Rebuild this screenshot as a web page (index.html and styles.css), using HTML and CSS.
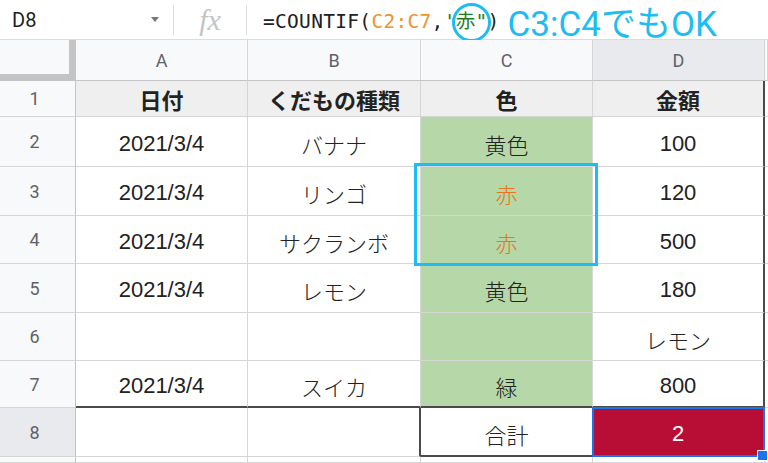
FILE: index.html
```html
<!DOCTYPE html>
<html lang="ja">
<head>
  <meta charset="UTF-8">
  <meta name="viewport" content="width=device-width, initial-scale=1.0">
  <title>COUNTIF</title>
  <link rel="stylesheet" href="styles.css">
</head>
<body>
  <div class="formula-bar">
    <div class="namebox">
      <span>D8</span>
      <span class="caret"></span>
    </div>
    <span class="sep"></span>
    <div class="fx">fx</div>
    <span class="sep"></span>
    <div class="formula">
      =COUNTIF(<span class="ref">C2:C7</span>,<span class="str">'赤"</span>)
    </div>
    <div class="note">C3:C4でもOK</div>
    <div class="circle"></div>
  </div>

  <div class="sheet">
    <!-- ヘッダー -->
    <div class="corner"></div>
    <div class="col-head">A</div>
    <div class="col-head">B</div>
    <div class="col-head">C</div>
    <div class="col-head active">D</div>
    <div class="col-head rest"></div>

    <div class="row-head">1</div>
    <div class="cell title">日付</div>
    <div class="cell title">くだもの種類</div>
    <div class="cell title">色</div>
    <div class="cell title edge">金額</div>
    <div class="cell rest"></div>

    <div class="row-head">2</div>
    <div class="cell">2021/3/4</div>
    <div class="cell">バナナ</div>
    <div class="cell green">黄色</div>
    <div class="cell edge">100</div>
    <div class="cell rest"></div>

    <div class="row-head">3</div>
    <div class="cell">2021/3/4</div>
    <div class="cell">リンゴ</div>
    <div class="cell green red">赤</div>
    <div class="cell edge">120</div>
    <div class="cell rest"></div>

    <div class="row-head">4</div>
    <div class="cell">2021/3/4</div>
    <div class="cell">サクランボ</div>
    <div class="cell green red">赤</div>
    <div class="cell edge">500</div>
    <div class="cell rest"></div>

    <div class="row-head">5</div>
    <div class="cell">2021/3/4</div>
    <div class="cell">レモン</div>
    <div class="cell green">黄色</div>
    <div class="cell edge">180</div>
    <div class="cell rest"></div>

    <div class="row-head">6</div>
    <div class="cell"></div>
    <div class="cell"></div>
    <div class="cell green"></div>
    <div class="cell edge">レモン</div>
    <div class="cell rest"></div>

    <div class="row-head">7</div>
    <div class="cell last">2021/3/4</div>
    <div class="cell last">スイカ</div>
    <div class="cell green last">緑</div>
    <div class="cell edge last">800</div>
    <div class="cell rest"></div>

    <div class="row-head active">8</div>
    <div class="cell"></div>
    <div class="cell boxed-left"></div>
    <div class="cell total">合計</div>
    <div class="cell edge result">2</div>
    <div class="cell rest"></div>

    <div class="row-head"></div>
    <div class="cell"></div>
    <div class="cell"></div>
    <div class="cell"></div>
    <div class="cell"></div>
    <div class="cell rest"></div>

    <div class="range-mark"></div>
  </div>
</body>
</html>
```

FILE: styles.css
```css
* {
  margin: 0;
  padding: 0;
  box-sizing: border-box;
}

body {
  width: 768px;
  height: 463px;
  overflow: hidden;
  background: #fff;
  font-family: "Liberation Sans", "Noto Sans CJK JP", sans-serif;
  color: #222;
}

/* 数式バー */
.formula-bar {
  position: relative;
  height: 40px;
  display: flex;
  align-items: center;
  border-bottom: 1px solid #dadce0;
}

.namebox {
  width: 173px;
  padding: 0 14px 0 12px;
  display: flex;
  align-items: center;
  justify-content: space-between;
  font-family: Roboto, sans-serif;
  font-size: 20px;
  color: #202124;
}

.caret {
  width: 0;
  height: 0;
  border-left: 4px solid transparent;
  border-right: 4px solid transparent;
  border-top: 5px solid #777;
}

.sep {
  width: 1px;
  height: 30px;
  background: #dadce0;
}

.fx {
  width: 72px;
  text-align: center;
  font-family: "Liberation Serif", serif;
  font-style: italic;
  font-size: 30px;
  color: #c4c4c4;
  line-height: 1;
}

.formula {
  padding-left: 16px;
  font-family: "DejaVu Sans Mono", "Noto Sans CJK JP", monospace;
  font-size: 19.5px;
  color: #202124;
  white-space: nowrap;
  letter-spacing: 0.3px;
}

.formula .ref {
  color: #f0922e;
}

.formula .str {
  color: #1e7e1e;
}

.note {
  margin-left: 8px;
  margin-top: 2px;
  font-family: Roboto, "Noto Sans CJK JP", sans-serif;
  font-size: 35px;
  color: #1bbdf2;
  white-space: nowrap;
}

.circle {
  position: absolute;
  left: 452px;
  top: 3px;
  width: 39px;
  height: 39px;
  border: 3px solid #1bbdf2;
  border-radius: 50%;
}

/* シート */
.sheet {
  position: relative;
  display: grid;
  grid-template-columns: 76px 172px 173px 172px 172px 3px;
  grid-template-rows: 41px 36px 50px 49px 48px 49px 48px 47px 49px 6px;
}

.corner {
  background: #f8f9fa;
  border-right: 7px solid #c4c4c4;
  border-bottom: 7px solid #c4c4c4;
}

.col-head {
  display: flex;
  align-items: center;
  justify-content: center;
  background: #f8f9fa;
  border-right: 1px solid #d6d6d6;
  border-bottom: 1px solid #c4c4c4;
  font-family: Roboto, sans-serif;
  font-size: 18px;
  color: #5f6368;
}

.col-head.active {
  background: #e8eaed;
}

.row-head {
  display: flex;
  align-items: center;
  justify-content: center;
  padding-right: 6px;
  background: #f8f9fa;
  border-right: 1px solid #c4c4c4;
  border-bottom: 1px solid #d6d6d6;
  font-family: Roboto, sans-serif;
  font-size: 18px;
  color: #5f6368;
}

.row-head.active {
  background: #e8eaed;
}

.cell {
  display: flex;
  align-items: center;
  justify-content: center;
  padding-top: 4px;
  border-right: 1px solid #d6d6d6;
  border-bottom: 1px solid #d6d6d6;
  font-size: 22px;
  font-weight: 300;
  white-space: nowrap;
}

.cell.rest {
  border-right: none;
}

.cell.title {
  padding-top: 0;
  background: #efefef;
  font-weight: bold;
}

.cell.green {
  background: #b6d7a8;
}

.cell.red {
  color: #e6761f;
}

.cell.edge {
  border-right: 2px solid #4a4a4a;
}

.cell.last {
  border-bottom: 2px solid #4a4a4a;
}

.cell.boxed-left {
  border-right: 2px solid #4a4a4a;
}

.cell.total {
  border-bottom: 2px solid #4a4a4a;
}

.cell.result {
  position: relative;
  background: #b80d35;
  color: #fff;
  font-weight: 400;
}

/* 選択セル */
.cell.result::after {
  content: "";
  position: absolute;
  inset: -1px -2px -1px -1px;
  border: 2px solid #1a73e8;
}

.cell.result::before {
  content: "";
  position: absolute;
  right: -5px;
  bottom: -5px;
  width: 9px;
  height: 9px;
  background: #1a73e8;
  border: 1px solid #fff;
  z-index: 1;
}

.range-mark {
  position: absolute;
  left: 414px;
  top: 123px;
  width: 184px;
  height: 103px;
  border: 3px solid #1bbdf2;
}
```
